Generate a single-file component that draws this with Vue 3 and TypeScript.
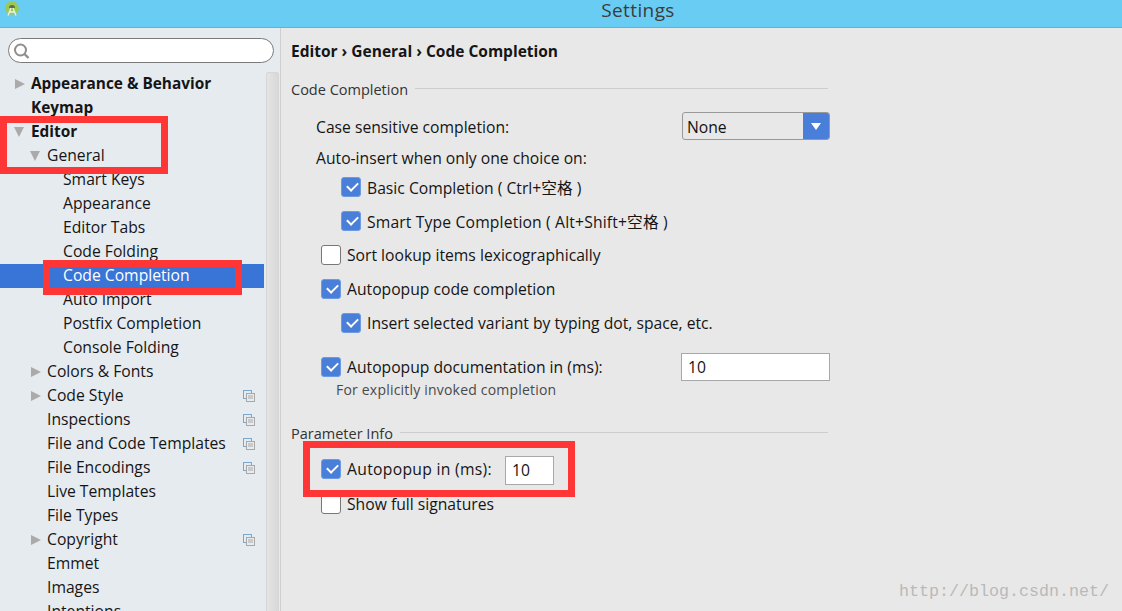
<script setup lang="ts">
interface TreeItem { label: string; level: number; arrow?: 'right' | 'down'; bold?: boolean; selected?: boolean; copy?: boolean }
const items: TreeItem[] = [
  { label: 'Appearance & Behavior', level: 0, arrow: 'right', bold: true },
  { label: 'Keymap', level: 0, bold: true },
  { label: 'Editor', level: 0, arrow: 'down', bold: true },
  { label: 'General', level: 1, arrow: 'down' },
  { label: 'Smart Keys', level: 2 },
  { label: 'Appearance', level: 2 },
  { label: 'Editor Tabs', level: 2 },
  { label: 'Code Folding', level: 2 },
  { label: 'Code Completion', level: 2, selected: true },
  { label: 'Auto Import', level: 2 },
  { label: 'Postfix Completion', level: 2 },
  { label: 'Console Folding', level: 2 },
  { label: 'Colors & Fonts', level: 1, arrow: 'right' },
  { label: 'Code Style', level: 1, arrow: 'right', copy: true },
  { label: 'Inspections', level: 1, copy: true },
  { label: 'File and Code Templates', level: 1, copy: true },
  { label: 'File Encodings', level: 1, copy: true },
  { label: 'Live Templates', level: 1 },
  { label: 'File Types', level: 1 },
  { label: 'Copyright', level: 1, arrow: 'right', copy: true },
  { label: 'Emmet', level: 1 },
  { label: 'Images', level: 1 },
  { label: 'Intentions', level: 1 },
]
</script>

<template>
  <div class="window">
    <header class="titlebar">
      <svg class="logo" width="16" height="16" viewBox="0 0 16 16">
        <circle cx="8" cy="7" r="6.800" fill="#9cc94f" />
        <path d="M5 7a3 3 0 0 1 6 0z" fill="#5f6b4e" />
        <path d="M7 7 4 14.500M9 7l3 7.500M5 11h6" stroke="#eef3e6" stroke-width="1.300" fill="none" />
      </svg>
      <span class="title">Settings</span>
    </header>
    <div class="body">
      <aside class="sidebar">
        <div class="search">
          <svg width="17" height="17" viewBox="0 0 17 17">
            <circle cx="7.500" cy="8" r="5.500" fill="none" stroke="#8e8e8e" stroke-width="2" />
            <path d="m11.500 12 4 4" stroke="#8e8e8e" stroke-width="2.400" />
          </svg>
        </div>
        <div class="tree-wrap">
          <ul class="tree">
            <li v-for="item in items" :key="item.label" class="node" :class="[`level-${item.level}`, { selected: item.selected, bold: item.bold }]">
              <i v-if="item.arrow" class="arrow" :class="item.arrow"></i>
              <span class="node-label">{{ item.label }}</span>
              <svg v-if="item.copy" class="copy" width="12" height="12" viewBox="0 0 12 12">
                <rect x="0.500" y="0.500" width="8" height="8" fill="#e6ebf0" stroke="#7aa6cf" />
                <rect x="3.500" y="3.500" width="8" height="8" fill="#e6ebf0" stroke="#a8a8a8" />
                <path d="M5 6h5M5 8h5" stroke="#a8a8a8" />
              </svg>
            </li>
          </ul>
          <div class="scrollbar"></div>
        </div>
      </aside>
      <main class="content">
        <nav class="crumbs">Editor › General › Code Completion</nav>

        <div class="section-head first"><span>Code Completion</span><i class="rule"></i></div>
        <div class="row case indent-1">
          <span class="grow">Case sensitive completion:</span>
          <div class="select">
            <span class="select-value">None</span>
            <span class="select-btn"><i></i></span>
          </div>
        </div>
        <div class="row auto indent-1">Auto-insert when only one choice on:</div>
        <div class="row opt indent-2"><i class="check on"></i>Basic Completion ( Ctrl+空格 )</div>
        <div class="row opt indent-2 wider"><i class="check on"></i>Smart Type Completion ( Alt+Shift+空格 )</div>
        <div class="row opt indent-1b"><i class="check"></i>Sort lookup items lexicographically</div>
        <div class="row opt indent-1b"><i class="check on"></i>Autopopup code completion</div>
        <div class="row opt indent-2"><i class="check on"></i>Insert selected variant by typing dot, space, etc.</div>
        <div class="row doc indent-1b">
          <i class="check on"></i><span class="grow">Autopopup documentation in (ms):</span>
          <div class="input wide">10</div>
        </div>
        <div class="hint">For explicitly invoked completion</div>

        <div class="section-head second"><span>Parameter Info</span><i class="rule"></i></div>
        <div class="row param indent-1b">
          <i class="check on"></i><span class="wider">Autopopup in (ms):</span>
          <div class="input small">10</div>
        </div>
        <div class="row full indent-1b"><i class="check"></i>Show full signatures</div>
      </main>
    </div>

    <i class="mark m1"></i>
    <i class="mark m2"></i>
    <i class="mark m3"></i>
    <span class="watermark">http://blog.csdn.net/</span>
  </div>
</template>

<style scoped>
.window {
  width: 1122px;
  height: 611px;
  position: relative;
  overflow: hidden;
  font-family: "Open Sans", "Noto Sans CJK SC", sans-serif;
  font-size: 15.700px;
  color: #151515;
  background: #e8e8e8;
}
.titlebar {
  height: 27px;
  background: #69cdf3;
  border-bottom: 1px solid #5fb4d6;
  display: flex;
  align-items: flex-start;
  justify-content: center;
  position: relative;
  padding-left: 154px;
}
.logo { position: absolute; left: 4px; top: 1px; }
.title { font-size: 19px; line-height: 20px; color: #3c3c3c; letter-spacing: 0.400px; }
.body { display: flex; height: 583px; }
.sidebar {
  width: 280px;
  flex: none;
  background: #e6ebf0;
  border-right: 1px solid #cfcfcf;
}
.search {
  margin: 10px 0 0 8px;
  width: 266px;
  height: 25px;
  box-sizing: border-box;
  border: 1px solid #7a7a7a;
  border-radius: 13px;
  background: #fff;
  display: flex;
  align-items: center;
  padding-left: 4px;
}
.tree-wrap { display: flex; margin-top: 9px; }
.tree { list-style: none; margin: 0; padding: 0; width: 264px; flex: none; }
.node {
  height: 24px;
  display: flex;
  align-items: center;
  position: relative;
  white-space: nowrap;
}
.node-label { padding-bottom: 2px; }
.node.bold { font-weight: 700; font-size: 15.400px; }
.level-0 { padding-left: 31px; }
.level-1 { padding-left: 47px; }
.level-2 { padding-left: 63px; }
.node.selected { background: #3875d7; color: #fff; }
.arrow { position: absolute; width: 0; height: 0; }
.level-0 .arrow { left: 15px; }
.level-1 .arrow { left: 31px; }
.level-0 .arrow.down { left: 14px; }
.level-1 .arrow.down { left: 30px; }
.arrow.right { border-left: 10px solid #aaa; border-top: 5.500px solid transparent; border-bottom: 5.500px solid transparent; }
.arrow.down { border-top: 10px solid #aaa; border-left: 5.500px solid transparent; border-right: 5.500px solid transparent; }
.copy { position: absolute; left: 243px; top: 6px; }
.scrollbar {
  width: 13px;
  margin-left: 2px;
  height: 560px;
  box-sizing: border-box;
  border: 1px solid #d6d6d6;
  border-radius: 2px;
  background: linear-gradient(90deg, #e4e4e4, #d8d8d8);
}
.content { flex: 1; padding-left: 10px; min-width: 0; }
.crumbs { font-weight: 700; font-size: 15.500px; height: 24px; line-height: 24px; margin-top: 11px; }
.section-head { display: flex; align-items: center; gap: 7px; height: 20px; width: 537px; white-space: nowrap; font-size: 14.500px; color: #333; }
.section-head.first { margin-top: 16px; }
.section-head.second { margin-top: 24px; }
.rule { flex: 1; height: 1px; background: #cdcdcd; margin-top: -2px; }
.row { display: flex; align-items: center; white-space: nowrap; }
.grow { flex: 1; }
.indent-1 { padding-left: 25px; }
.indent-1b { padding-left: 30px; }
.indent-2 { padding-left: 50px; }
.wider { letter-spacing: 0.150px; }
.param .wider { letter-spacing: 0.300px; }
.case { height: 28px; margin-top: 13px; width: 514px; }
.case .grow { padding-top: 2px; }
.auto { height: 24px; margin-top: 6px; }
.opt { height: 34px; }
.doc { height: 28px; margin-top: 13px; width: 509px; }
.hint { font-size: 14px; color: #4a4a4a; padding-left: 45px; height: 18px; line-height: 18px; letter-spacing: 0.200px; }
.check {
  width: 20px;
  height: 20px;
  box-sizing: border-box;
  border: 1px solid #777;
  border-radius: 3px;
  background: #fff;
  margin-right: 6px;
  flex: none;
  position: relative;
}
.check.on { background: #4a7fd9; border-color: #6d9be3; }
.check.on::after {
  content: "";
  position: absolute;
  left: 4.500px;
  top: 3.500px;
  width: 9px;
  height: 5px;
  border-left: 2.500px solid #fff;
  border-bottom: 2.500px solid #fff;
  transform: rotate(-45deg);
}
.select {
  width: 148px;
  height: 28px;
  box-sizing: border-box;
  border: 1px solid #999;
  border-radius: 3px;
  display: flex;
  overflow: hidden;
}
.select-value { flex: 1; padding-left: 4px; line-height: 28px; color: #111; }
.select-btn { width: 26px; background: #4a7fd9; display: flex; align-items: center; justify-content: center; }
.select-btn i { width: 0; height: 0; border-top: 7px solid #fff; border-left: 5.500px solid transparent; border-right: 5.500px solid transparent; }
.input {
  background: #fff;
  border: 1px solid #a8a8a8;
  box-sizing: border-box;
  height: 28px;
  line-height: 26px;
}
.wide { width: 149px; padding-left: 6px; }
.small { width: 49px; height: 29px; line-height: 27px; margin-left: 13px; padding-left: 6px; }
.param { height: 29px; margin-top: 13px; }
.param .check, .param span { margin-bottom: 3px; }
.full { height: 24px; margin-top: 7px; }
.mark { position: absolute; border: 7px solid #fe3636; box-sizing: border-box; pointer-events: none; }
.m1 { left: 0; top: 116px; width: 168px; height: 58px; }
.m2 { left: 43px; top: 260px; width: 199px; height: 35px; }
.m3 { left: 303px; top: 441px; width: 272px; height: 56px; }
.watermark {
  position: absolute;
  left: 899px;
  top: 582px;
  font-family: "Liberation Mono", monospace;
  font-size: 16.670px;
  color: #b9b9b9;
  white-space: nowrap;
}
</style>
